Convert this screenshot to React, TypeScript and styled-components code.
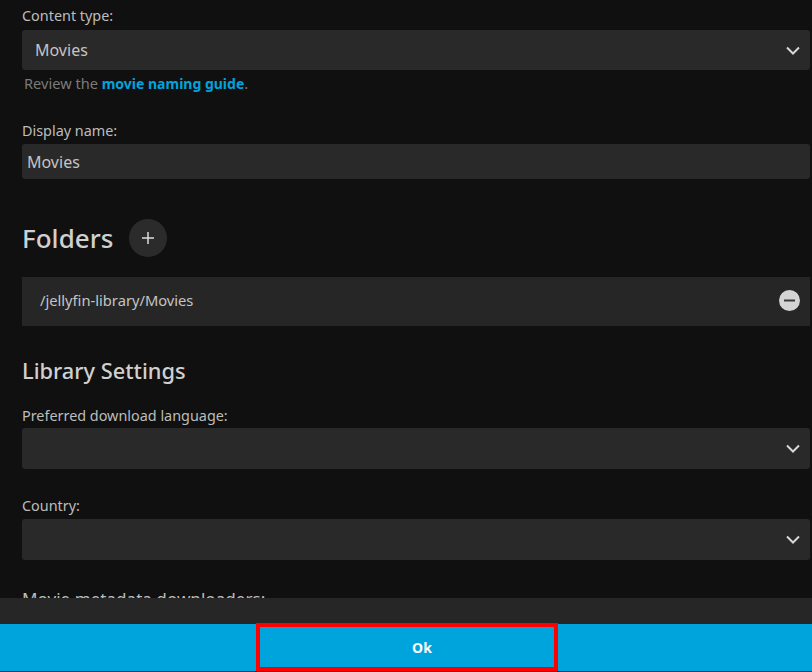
import React from "react";
import styled, { createGlobalStyle } from "styled-components";

const GlobalStyle = createGlobalStyle`
  html, body {
    margin: 0;
    padding: 0;
    background: #101010;
    overflow: hidden;
  }
  body {
    font-family: "Noto Sans", "Open Sans", sans-serif;
    color: rgba(255, 255, 255, 0.8);
  }
`;

const Dialog = styled.div`
  width: 812px;
  height: 672px;
  display: flex;
  flex-direction: column;
  background: #101010;
`;

const Scroller = styled.div`
  flex: 1;
  min-height: 0;
  overflow: hidden;
  padding: 7px 2px 0 22px;
`;

const Field = styled.div<{ $gap?: number }>`
  margin-bottom: ${(p) => p.$gap ?? 0}px;
`;

const Label = styled.label<{ $gap?: number }>`
  display: block;
  font-size: 14.4px;
  line-height: 18px;
  margin-bottom: ${(p) => p.$gap ?? 5}px;
  color: #bdbdbd;
`;

const DownloadersLabel = styled(Label)`
  font-size: 17.1px;
`;

const SelectBox = styled.div`
  height: 40px;
  display: flex;
  align-items: center;
  justify-content: space-between;
  padding: 0 10px 0 13px;
  background: #292929;
  border-radius: 3px;
  font-size: 16px;
  color: #c4c4c4;
`;

const TextBox = styled.div`
  height: 35px;
  display: flex;
  align-items: center;
  padding: 0 5px;
  background: #292929;
  border-radius: 3px;
  font-size: 16px;
  color: #c4c4c4;
`;

const Help = styled.div`
  font-size: 14.6px;
  line-height: 18px;
  margin: 4px 0 0 2px;
  color: #7a7a7a;
`;

const HelpLink = styled.a`
  font-size: 14px;
  font-weight: 700;
  color: #00a4dc;
`;

const FolderHeader = styled.div`
  display: flex;
  align-items: center;
  gap: 16px;
  margin-bottom: 20px;
`;

const Heading = styled.h2`
  margin: 0;
  font-size: 26px;
  line-height: 38px;
  font-weight: 500;
  color: #d0d0d0;
`;

const RoundButton = styled.button`
  width: 38px;
  height: 38px;
  padding: 0;
  border: 0;
  border-radius: 50%;
  display: flex;
  align-items: center;
  justify-content: center;
  background: #2b2b2b;
  color: #dcdcdc;
`;

const FolderRow = styled.div`
  height: 46px;
  display: flex;
  align-items: center;
  justify-content: space-between;
  padding: 0 10px 3px 18px;
  background: #262626;
  font-size: 14.7px;
  color: #c4c4c4;
  margin-bottom: 30px;
`;

const SubHeading = styled.h3`
  margin: 0 0 21px;
  font-size: 21.8px;
  line-height: 30px;
  font-weight: 500;
  color: #d0d0d0;
`;

const TallSelect = styled(SelectBox)`
  height: 41px;
`;

const Footer = styled.div`
  position: relative;
  flex: none;
  height: 74px;
  display: flex;
  flex-direction: column;
  background: #262626;
  padding-top: 26px;
  box-sizing: border-box;
`;

const OkBar = styled.button`
  flex: 1;
  border: 0;
  padding: 0 0 0 32px;
  margin-bottom: 1px;
  background: #00a4dc;
  color: #fff;
  font-family: inherit;
  font-size: 14px;
  font-weight: 700;
`;

const Highlight = styled.div`
  position: absolute;
  left: 256px;
  top: 25px;
  width: 302px;
  height: 48px;
  box-sizing: border-box;
  border: 4px solid #ff0000;
  pointer-events: none;
`;

function Chevron() {
  return (
    <svg width="14" height="9" viewBox="0 0 14 9" fill="none">
      <path d="M1 1.5 7 7.5 13 1.5" stroke="#d8d8d8" strokeWidth="2" />
    </svg>
  );
}

export default function App() {
  return (
    <>
      <GlobalStyle />
      <Dialog>
        <Scroller>
          <Field $gap={29}>
            <Label>Content type:</Label>
            <SelectBox>
              Movies
              <Chevron />
            </SelectBox>
            <Help>
              Review the <HelpLink>movie naming guide</HelpLink>.
            </Help>
          </Field>
          <Field $gap={40}>
            <Label $gap={4}>Display name:</Label>
            <TextBox>Movies</TextBox>
          </Field>
          <FolderHeader>
            <Heading>Folders</Heading>
            <RoundButton>
              <svg width="12" height="12" viewBox="0 0 12 12">
                <path d="M6 0v12M0 6h12" stroke="currentColor" strokeWidth="1.5" />
              </svg>
            </RoundButton>
          </FolderHeader>
          <FolderRow>
            /jellyfin-library/Movies
            <svg width="21" height="21" viewBox="0 0 21 21">
              <circle cx="10.5" cy="10.5" r="10.5" fill="#d4d4d4" />
              <path d="M5 10.5h11" stroke="#3a3a3a" strokeWidth="2" />
            </svg>
          </FolderRow>
          <SubHeading>Library Settings</SubHeading>
          <Field $gap={28}>
            <Label $gap={3}>Preferred download language:</Label>
            <TallSelect>
              <span />
              <Chevron />
            </TallSelect>
          </Field>
          <Field $gap={30}>
            <Label $gap={4}>Country:</Label>
            <TallSelect>
              <span />
              <Chevron />
            </TallSelect>
          </Field>
          <DownloadersLabel>Movie metadata downloaders:</DownloadersLabel>
        </Scroller>
        <Footer>
          <OkBar>Ok</OkBar>
          <Highlight />
        </Footer>
      </Dialog>
    </>
  );
}
